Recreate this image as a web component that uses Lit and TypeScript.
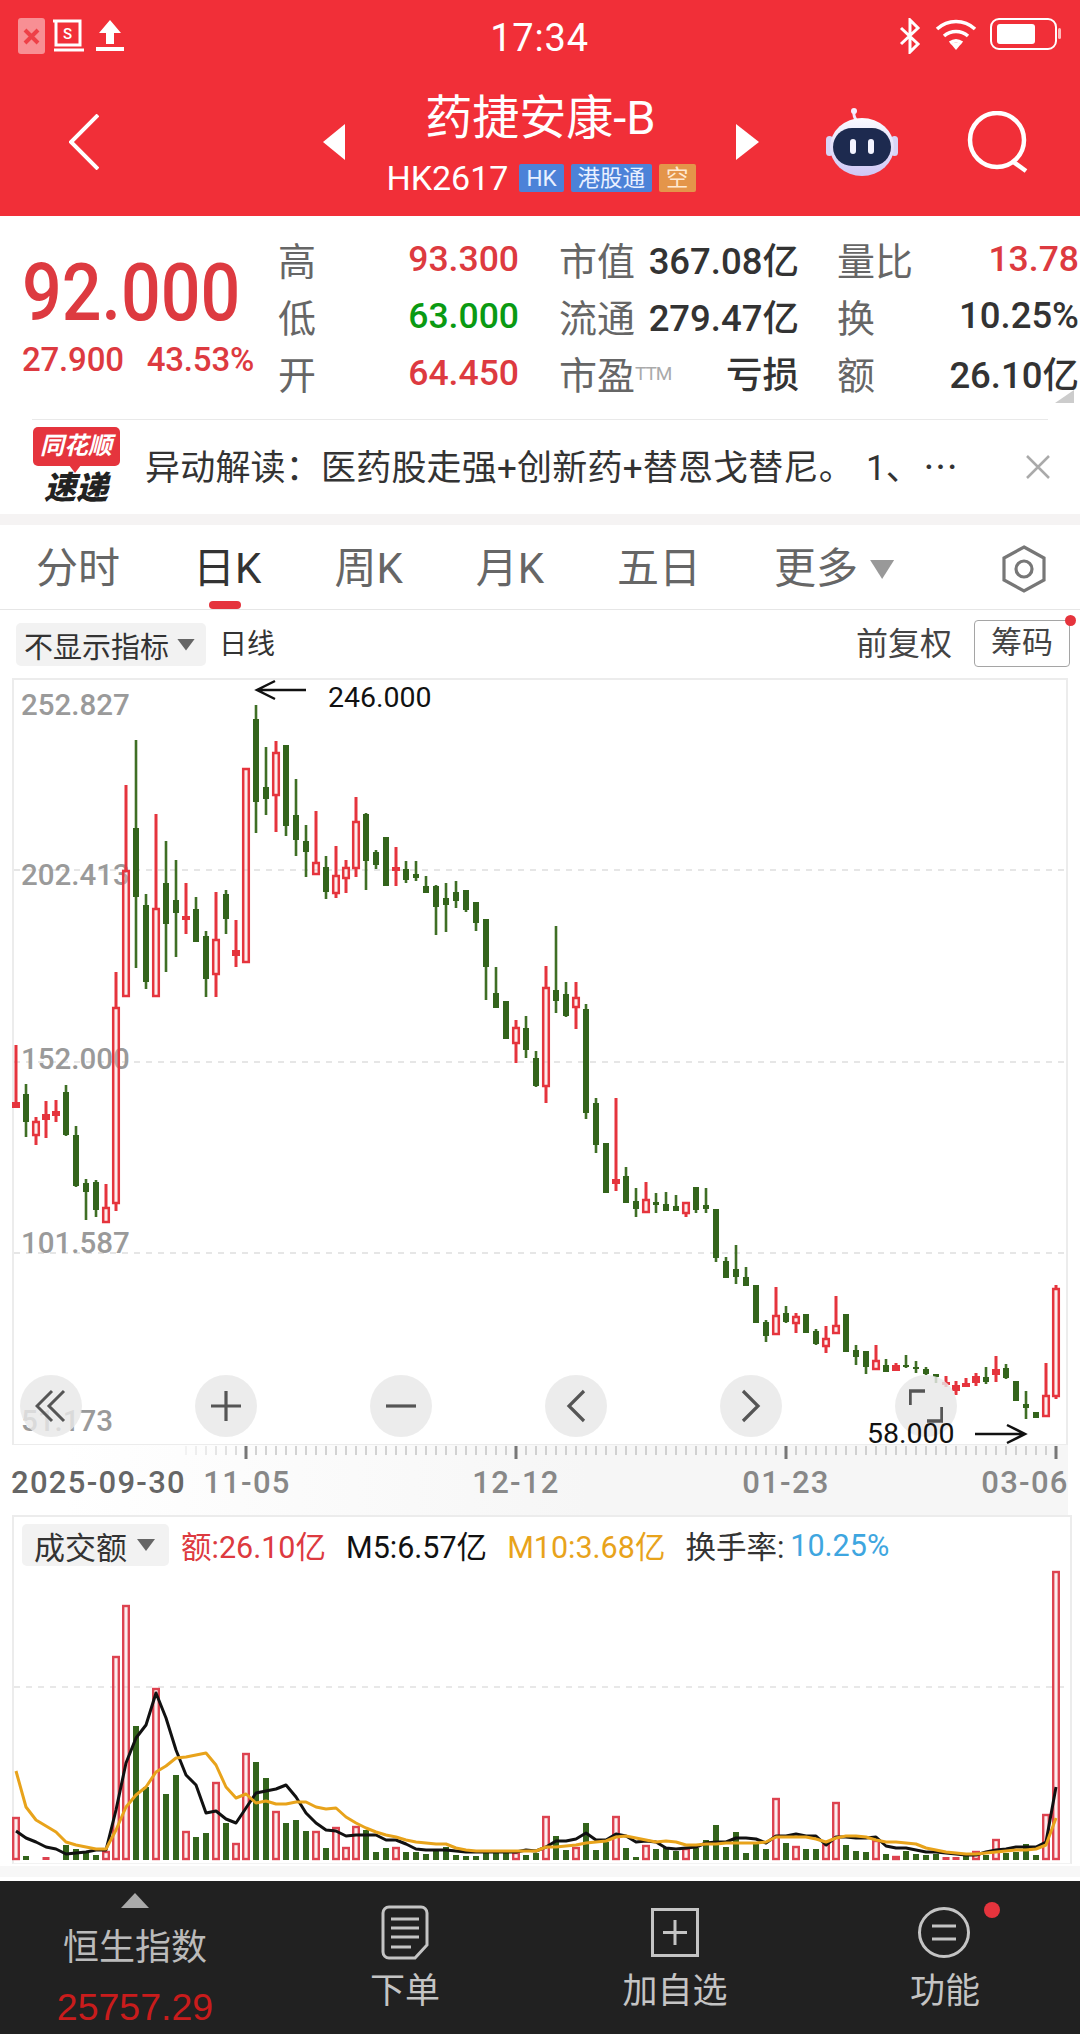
import { LitElement, html, css, svg } from "lit";
import { customElement } from "lit/decorators.js";

type C = [string, number, number, number, number];
// type: g = green solid, h = red hollow, s = red solid; wick top, wick bottom, body top, body bottom
const CANDLES: C[] = [
["s",1045,1108,1102,1108],["g",1084,1137,1094,1122],["h",1117,1145,1122,1135],["s",1101,1138,1114,1120],["s",1100,1122,1111,1116],
["g",1085,1136,1092,1135],["g",1126,1187,1135,1186],["g",1179,1220,1183,1192],["g",1180,1217,1182,1210],["h",1184,1222,1208,1222],
["h",972,1211,1008,1203],["h",785,997,871,996],["g",740,968,828,897],["g",894,989,905,982],["h",814,997,909,996],
["g",841,972,883,924],["g",860,957,900,913],["s",883,934,916,920],["g",897,942,909,942],["g",931,997,936,979],
["h",892,997,940,974],["g",890,934,894,919],["s",920,967,950,956],["h",768,963,769,962],["g",705,833,719,802],
["g",747,815,787,799],["h",741,832,753,795],["g",745,836,745,826],["g",779,856,815,840],["g",825,877,841,852],
["h",811,875,863,874],["g",856,899,867,892],["h",846,898,876,893],["h",860,893,868,878],["h",797,877,822,868],
["g",813,890,814,861],["g",850,869,852,865],["g",837,886,837,886],["s",847,886,867,871],["g",861,883,869,880],
["g",861,881,874,878],["g",876,893,886,893],["g",885,935,886,907],["g",883,932,898,905],["g",881,908,892,901],
["g",890,912,890,910],["g",902,931,902,923],["g",919,1000,919,967],["g",967,1008,993,1008],["g",1001,1039,1001,1039],
["h",1020,1063,1028,1043],["g",1016,1058,1028,1050],["g",1051,1087,1058,1086],["h",966,1103,988,1086],["g",926,1013,990,1001],
["g",982,1017,994,1016],["h",982,1029,998,1007],["g",1004,1119,1009,1113],["g",1098,1153,1103,1145],["g",1143,1193,1143,1193],
["s",1098,1191,1179,1184],["g",1167,1203,1176,1203],["g",1188,1217,1201,1209],["h",1182,1213,1200,1212],["g",1193,1213,1202,1205],
["g",1192,1211,1204,1211],["g",1195,1211,1206,1211],["h",1202,1217,1203,1213],["g",1187,1213,1187,1210],["g",1188,1213,1205,1209],
["g",1209,1262,1209,1258],["g",1257,1278,1261,1278],["g",1245,1284,1269,1277],["g",1267,1286,1277,1286],["g",1285,1323,1285,1323],
["g",1320,1342,1322,1336],["h",1287,1335,1316,1334],["g",1306,1323,1313,1322],["h",1313,1333,1317,1323],["g",1314,1333,1314,1333],
["g",1329,1345,1331,1344],["h",1326,1353,1339,1346],["h",1296,1333,1326,1333],["g",1314,1352,1314,1352],["g",1345,1365,1350,1357],
["g",1351,1374,1351,1367],["h",1345,1370,1361,1369],["g",1359,1372,1365,1372],["s",1363,1371,1365,1371],["g",1355,1368,1365,1367],
["g",1361,1373,1367,1369],["g",1367,1375,1369,1374],["g",1374,1383,1374,1377],["s",1376,1387,1382,1385],["s",1381,1395,1385,1391],
["s",1378,1387,1383,1387],["s",1373,1386,1376,1383],["g",1367,1384,1377,1382],["s",1356,1382,1369,1375],["g",1364,1379,1368,1378],
["g",1381,1401,1381,1401],["g",1391,1419,1404,1408],["g",1412,1418,1412,1418],["h",1363,1416,1396,1416],["h",1285,1399,1289,1396],
];
// volume bar tops, by candle index; kind: g, h or "" for no bar
const VOL: [string, number][] = [
["h",1817],["g",1856],["",0],["s",1857],["",0],["g",1845],["g",1849],["g",1851],["g",1855],["h",1851],
["h",1656],["h",1605],["g",1726],["g",1787],["h",1688],["g",1794],["g",1775],["h",1831],["g",1837],["g",1833],
["h",1782],["g",1823],["h",1843],["h",1753],["g",1762],["g",1778],["h",1811],["g",1823],["g",1820],["g",1831],
["h",1831],["g",1848],["h",1827],["h",1847],["h",1826],["g",1830],["g",1852],["g",1848],["h",1847],["g",1852],
["g",1852],["g",1854],["g",1850],["g",1847],["g",1855],["g",1856],["g",1856],["g",1850],["g",1853],["g",1853],
["h",1852],["g",1855],["g",1853],["h",1816],["g",1836],["g",1850],["h",1847],["g",1823],["g",1850],["g",1842],
["h",1816],["g",1848],["g",1857],["h",1845],["g",1849],["g",1847],["g",1851],["h",1848],["g",1848],["g",1840],
["g",1825],["g",1847],["g",1832],["g",1853],["g",1843],["g",1849],["h",1798],["g",1843],["h",1846],["g",1849],
["g",1849],["h",1844],["h",1802],["g",1845],["g",1851],["g",1852],["h",1840],["g",1854],["h",1856],["g",1851],
["g",1854],["g",1855],["g",1854],["s",1857],["s",1857],["g",1856],["h",1851],["g",1855],["h",1839],["g",1853],
["g",1852],["g",1844],["g",1855],["h",1814],["h",1571],
];
const M5 = [1831,1838,1842,1847,1849,1854,1853,1852,1850,1850,1810,1763,1738,1725,1693,1718,1750,1775,1785,1813,1811,1819,1823,1808,1793,1791,1789,1785,1797,1813,1823,1830,1831,1836,1835,1835,1835,1840,1840,1844,1849,1850,1850,1850,1851,1852,1852,1852,1852,1852,1852,1850,1851,
1847,1841,1841,1839,1833,1840,1840,1834,1836,1842,1841,1842,1848,1849,1848,1847,1843,1842,1842,1838,1838,1839,1843,1836,1836,1834,1836,1836,1845,1837,1837,1838,1838,1837,1846,1848,1848,1850,1852,1852,1853,1854,1855,1855,1852,1850,1849,1847,1847,1847,1842,1787];
const M10 = [1771,1807,1820,1826,1832,1842,1845,1847,1849,1849,1830,1807,1795,1787,1772,1766,1758,1757,1755,1753,1765,1787,1798,1794,1803,1801,1804,1804,1802,1802,1807,1809,1808,1817,1823,1828,1832,1835,1837,1840,1842,1843,1844,1844,1848,1850,1851,1851,1851,1851,1851,1851,1851,
1847,1847,1846,1845,1843,1842,1841,1837,1836,1838,1840,1842,1841,1842,1845,1845,1844,1844,1843,1843,1843,1843,1842,1837,1837,1837,1837,1839,1842,1838,1836,1836,1837,1840,1842,1842,1843,1844,1848,1850,1852,1853,1854,1854,1853,1852,1851,1850,1850,1849,1845,1818];

const cx = (i: number) => 16 + 10 * i;
const poly = (a: number[]) => a.map((y, i) => `${cx(i)},${y}`).join(" ");

@customElement("app-root")
export class AppRoot extends LitElement {
  static styles = css`
    :host { display: block; width: 1080px; height: 2034px; overflow: hidden; background: #fff;
      font-family: Roboto, "Noto Sans CJK SC", sans-serif; color: #333; }
    * { box-sizing: border-box; }
    svg { display: block; }
    .header { height: 216px; background: #f12f38; color: #fff; display: flex; flex-direction: column; }
    .status { height: 90px; display: grid; grid-template-columns: 1fr auto 1fr; padding: 18px 19px 0 18px; }
    .st-left { display: flex; gap: 7px; align-items: flex-start; }
    .st-right { display: flex; justify-content: flex-end; align-items: flex-start; gap: 12px; }
    .time { font-size: 38px; line-height: 40px; letter-spacing: .8px; }
    .nav { height: 104px; display: flex; align-items: center; padding-left: 69px; }
    .center { width: 391px; display: flex; flex-direction: column; align-items: center; }
    .title { font-size: 47px; line-height: 52px; }
    .sub { display: flex; align-items: center; gap: 7px; margin-top: 20px; height: 28px; margin-left: 1px; }
    .code { font-size: 34px; line-height: 28px; margin-right: 4px; }
    .badge { height: 28px; padding: 0 7px; background: #4c82d8; color: #e9f0ff; border-radius: 2px; font-size: 22.500px; line-height: 28px; }
    .badge.org { background: #e4954a; color: #ffe9d2; }
    .tri-l { margin-left: 224px; }
    .robot { margin-left: 67px; }
    .search { margin-left: 69px; }

    .quote { height: 203px; padding: 14px 0 0 22px; display: grid; grid-template-columns: 256px 241px 40px 240px 38px 242px; grid-template-rows: repeat(3, 57px); }
    .price { grid-row: 1 / 4; padding-top: 22px; color: #dd3a40; }
    .big { font-size: 80px; line-height: 82px; font-weight: 500; display: inline-block; transform: scaleX(.875); transform-origin: left center; }
    .chg { display: flex; gap: 23px; font-size: 33px; line-height: 40px; font-weight: 500; margin-top: 6px; letter-spacing: -.2px; }
    .cell { display: flex; justify-content: space-between; align-items: center; white-space: nowrap; }
    .lb { font-size: 38px; color: #666; }
    .val { font-size: 36.500px; font-weight: 500; color: #333; }
    .val.red, .val.grn { font-size: 35.500px; }
    .red { color: #dd3a40; }
    .grn { color: #0a9a12; }
    .ttm { font-size: 19px; color: #aaa; vertical-align: 9px; letter-spacing: -1px; }
    .corner { position: absolute; left: 1055px; top: 390px; width: 19px; height: 13px; background: #ccc; clip-path: polygon(100% 0, 100% 100%, 0 100%); }

    .news { height: 95px; margin: 0 32px; border-top: 1px solid #e9e9e9; display: flex; align-items: center; }
    .logo { width: 88px; margin-top: -2px; display: flex; flex-direction: column; align-items: center; flex: none; position: relative; }
    .bubble { width: 87px; height: 39px; background: #e5343d; border-radius: 5px; color: #fff; font-size: 24px; line-height: 39px; font-weight: 700; font-style: italic; text-align: center; }
    .bubble-tip { position: absolute; left: 37px; top: 38px; border: 6px solid transparent; border-top: 8px solid #e5343d; }
    .dijie { font-size: 32px; line-height: 34px; font-weight: 900; font-style: italic; color: #222; margin-top: 5px; }
    .news-text { margin-left: 25px; flex: none; font-size: 35px; line-height: 48px; letter-spacing: .2px; white-space: nowrap; color: #333; }
    .num1 { margin-left: 12px; }
    .dots { font-family: "Noto Sans CJK SC", sans-serif; margin-left: 2px; }
    .gap { height: 11px; background: #f5f3f3; }

    .tabs { height: 85px; border-bottom: 1px solid #e6e6e6; display: flex; align-items: flex-start; gap: 73px; padding: 21px 0 0 36px; position: relative; }
    .tab { font-size: 42px; line-height: 46px; color: #666; position: relative; white-space: nowrap; }
    .tab.on { color: #333; }
    .tab.on::after { content: ""; position: absolute; left: 16px; top: 55px; width: 32px; height: 8px; border-radius: 4px; background: #e5343d; }
    .tab-tri { display: inline-block; width: 24px; height: 19px; background: #999; clip-path: polygon(0 0, 100% 0, 50% 100%); margin-left: 12px; vertical-align: 4px; }
    .gear { margin-left: auto; margin-right: 32px; margin-top: -1px; }

    .tools { height: 68px; display: flex; align-items: flex-start; padding: 13px 0 0 16px; position: relative; }
    .chip { background: #f2f2f2; border-radius: 5px; display: flex; align-items: center; color: #333; }
    .chip.ind { height: 43px; width: 190px; padding-left: 8px; font-size: 29px; }
    .tri { width: 18px; height: 12px; background: #666; clip-path: polygon(0 0, 100% 0, 50% 100%); margin-left: 8px; }
    .day { font-size: 28px; line-height: 43px; margin-left: 13px; color: #333; }
    .fq { margin-left: auto; font-size: 32px; line-height: 43px; color: #444; }
    .chou { position: relative; margin: -3px 10px 0 22px; width: 96px; height: 47px; border: 1.5px solid #a5a5a5; border-radius: 4px; font-size: 31px; line-height: 44px; text-align: center; color: #444; }
    .chou::after { content: ""; position: absolute; right: -7px; top: -6px; width: 11px; height: 11px; border-radius: 50%; background: #e5343d; }

    .canvas { position: relative; height: 767px; }
    .axis { font-size: 29.500px; font-weight: 500; fill: #9a9a9a; }
    .note { font-size: 28.500px; fill: #111; }
    .btns { position: absolute; left: 20px; top: 697px; display: flex; gap: 113px; }
    .btn { width: 62px; height: 62px; border-radius: 50%; background: rgba(232,232,232,.82); display: flex; align-items: center; justify-content: center; }
    .over { position: absolute; left: 0; top: 0; pointer-events: none; overflow: visible; }

    .ruler { height: 70px; background: linear-gradient(90deg, #fff 6%, #f6f6f6 55%) 0 0 / 1068px 100% no-repeat; }
    .date { font-size: 31px; font-weight: 500; letter-spacing: 1.3px; fill: #888; }
    .date.first { fill: #666; }

    .vol { height: 351px; position: relative; }
    .vol::before { content: ""; position: absolute; left: 12px; top: 0; width: 1056px; height: 346px; border: 2px solid #ececec; border-bottom: 1px solid #f2f2f2; }
    .legend { height: 55px; padding: 5px 0 0 22px; display: flex; align-items: center; position: relative; font-size: 30.500px; white-space: nowrap; }
    .chip.vo { height: 42px; width: 147px; padding-left: 12px; margin-right: 12px; font-size: 31px; }
    .legend span { margin-right: 20px; }
    .blk { color: #111; }
    .org { color: #e8a31b; }
    .blu { color: #3ea6e0; margin-left: 6px; }
    .dk { color: #333; }
    .legend .tight { margin-right: 0; }
    .legend .rd { color: #dd3a40; }
    .volsvg { position: relative; }
    .band { height: 11px; background: #f7f7f7; }
    .sp { height: 4px; }

    .foot { height: 153px; background: #212121; display: grid; grid-template-columns: repeat(4, 1fr); color: #c4c4c4; }
    .fc { display: flex; flex-direction: column; align-items: center; font-size: 35px; line-height: 42px; position: relative; }
    .fc .up { width: 28px; height: 15px; background: #aaa; clip-path: polygon(50% 0, 100% 100%, 0 100%); margin-top: 12px; }
    .fc .idx { margin-top: 18px; font-size: 36px; line-height: 44px; color: #bbb; }
    .fc .num { font-family: "Liberation Sans", sans-serif; font-size: 37.500px; line-height: 44px; color: #c91c1c; margin-top: 15px; }
    .fc svg { margin-top: 24px; }
    .fc .t { margin-top: 11px; }
    .dot { position: absolute; left: 174px; top: 21px; width: 16px; height: 16px; border-radius: 50%; background: #e5343d; }
    .s-txt { font-size: 15px; font-weight: 500; fill: #fff; stroke: none; }
  `;

  candles() {
    return CANDLES.map(([k, wt, wb, bt, bb], i) => {
      const x = cx(i);
      if (k === "g") {
        return svg`<rect x=${x - 1.3} y=${wt} width="2.6" height=${wb - wt} fill="#3f6f25"/><rect x=${x - 3} y=${bt} width="6" height=${bb - bt} fill="#33641b"/>`;
      }
      if (k === "s") {
        return svg`<rect x=${x - 1.5} y=${wt} width="3" height=${wb - wt} fill="#e5343d"/><rect x=${x - 4} y=${bt} width="8" height=${bb - bt} fill="#e5343d"/>`;
      }
      return svg`<rect x=${x - 1.5} y=${wt} width="3" height=${bt - wt} fill="#e5343d"/><rect x=${x - 1.5} y=${bb} width="3" height=${wb - bb} fill="#e5343d"/><rect x=${x - 2.8} y=${bt} width="5.6" height=${bb - bt} fill="#f5c8c8" fill-opacity=".35" stroke="#e5343d" stroke-width="2.5"/>`;
    });
  }

  volBars() {
    return VOL.map(([k, top], i) => {
      const x = cx(i);
      if (k === "") return null;
      if (k === "g") return svg`<rect x=${x - 3} y=${top} width="6" height=${1860 - top} fill="#33641b"/>`;
      if (k === "s") return svg`<rect x=${x - 3.5} y=${top} width="7" height=${1860 - top} fill="#dd4350"/>`;
      return svg`<rect x=${x - 2.8} y=${top + 1} width="5.6" height=${1858 - top} fill="#f5c8c8" fill-opacity=".3" stroke="#dd4350" stroke-width="2.4"/>`;
    });
  }

  ticks() {
    const out = [];
    for (let i = 17; i <= 104; i++) {
      const major = (i - 23) % 27 === 0;
      const x = cx(i);
      const op = i < 23 ? 0.25 + (i - 17) * 0.1 : 1;
      out.push(major
        ? svg`<rect x=${x - 1.5} y="1446" width="3" height="13" fill="#777"/>`
        : svg`<rect x=${x - .5} y="1446" width="1" height="9" fill="#aaa" opacity=${op}/>`);
    }
    return out;
  }

  render() {
    return html`
      <div class="header">
        <div class="status">
          <div class="st-left">
            <svg width="27" height="36" viewBox="0 0 27 36"><rect width="27" height="36" rx="3" fill="#f88f94"/><path d="M7 12l13 13M20 12L7 25" stroke="#ee4048" stroke-width="4"/></svg>
            <svg width="32" height="34" viewBox="0 0 32 34" fill="none" stroke="#fff" stroke-width="3"><path d="M1 3h27v24H4V3"/><path d="M2 32h30"/><text class="s-txt" x="11" y="21">S</text></svg>
            <svg style="margin-left:5px" width="28" height="34" viewBox="0 0 28 34" fill="#fff"><path d="M14 2L25 15H18V26H10V15H3z"/><rect y="29" width="28" height="4"/></svg>
          </div>
          <div class="time">17:34</div>
          <div class="st-right">
            <svg width="24" height="36" viewBox="0 0 24 36" fill="none" stroke="#fff" stroke-width="3"><path d="M3 10L20 26L12 34V2L20 10L3 26"/></svg>
            <svg width="44" height="32" viewBox="0 0 44 32" fill="none" stroke="#fff" stroke-width="3.6"><path d="M3 11c11-10 27-10 38 0M10 18c7-6 17-6 24 0M16 25c4-3 8-3 12 0" /><path d="M22 32l-5-6c3-2 7-2 10 0z" fill="#fff" stroke="none"/></svg>
            <svg width="71" height="32" viewBox="0 0 71 32" fill="none"><rect x="1" y="1" width="65" height="30" rx="8" stroke="#fff" stroke-width="2"/><rect x="7" y="6" width="38" height="20" rx="3" fill="#fff"/><rect x="68" y="10" width="3" height="11" rx="1.5" fill="#fbb"/></svg>
          </div>
        </div>
        <div class="nav">
          <svg width="30" height="56" viewBox="0 0 30 56" fill="none" stroke="#fff" stroke-width="4"><path d="M29 1L2 28L29 55"/></svg>
          <svg class="tri-l" width="22" height="36" viewBox="0 0 22 36" fill="#fff"><path d="M22 0V36L0 18z"/></svg>
          <div class="center">
            <div class="title">药捷安康-B</div>
            <div class="sub">
              <span class="code">HK2617</span>
              <span class="badge">HK</span>
              <span class="badge">港股通</span>
              <span class="badge org">空</span>
            </div>
          </div>
          <svg width="23" height="36" viewBox="0 0 23 36" fill="#fff"><path d="M0 0V36L23 18z"/></svg>
          <svg class="robot" width="72" height="68" viewBox="0 0 72 68" fill="none">
            <defs><linearGradient id="rb" x1="0" y1="0" x2="0" y2="1"><stop offset="0" stop-color="#fafaff"/><stop offset="1" stop-color="#cfc7f5"/></linearGradient></defs>
            <path d="M30 12C27 7 28 4 29 3" stroke="#f0e8ff" stroke-width="3"/><circle cx="28" cy="3" r="3" fill="#f6eeff"/>
            <rect x="0" y="28" width="7" height="20" rx="3.500" fill="#d8d4f6"/><rect x="65" y="28" width="7" height="20" rx="3.500" fill="#d8d4f6"/>
            <ellipse cx="36" cy="39" rx="32" ry="29" fill="url(#rb)"/>
            <rect x="7" y="20" width="58" height="38" rx="19" fill="#1d2a4f"/>
            <rect x="24" y="31" width="6" height="15" rx="3" fill="#f4f4ff"/><rect x="42" y="31" width="6" height="15" rx="3" fill="#f4f4ff"/>
          </svg>
          <svg class="search" width="62" height="62" viewBox="0 0 62 62" fill="none" stroke="#fff" stroke-width="4.5"><ellipse cx="30" cy="29" rx="27" ry="27"/><path d="M45 50l14 10"/></svg>
        </div>
      </div>

      <div class="quote">
        <div class="price">
          <div class="big">92.000</div>
          <div class="chg"><span>27.900</span><span>43.53%</span></div>
        </div>
        <div class="cell"><span class="lb">高</span><span class="val red">93.300</span></div><div></div>
        <div class="cell"><span class="lb">市值</span><span class="val">367.08亿</span></div><div></div>
        <div class="cell"><span class="lb">量比</span><span class="val red">13.78</span></div>
        <div class="cell"><span class="lb">低</span><span class="val grn">63.000</span></div><div></div>
        <div class="cell"><span class="lb">流通</span><span class="val">279.47亿</span></div><div></div>
        <div class="cell"><span class="lb">换</span><span class="val">10.25%</span></div>
        <div class="cell"><span class="lb">开</span><span class="val red">64.450</span></div><div></div>
        <div class="cell"><span class="lb">市盈<span class="ttm">TTM</span></span><span class="val">亏损</span></div><div></div>
        <div class="cell"><span class="lb">额</span><span class="val">26.10亿</span></div>
        <div class="corner"></div>
      </div>

      <div class="news">
        <div class="logo">
          <div class="bubble">同花顺</div>
          <div class="bubble-tip"></div>
          <div class="dijie">速递</div>
        </div>
        <div class="news-text">异动解读：医药股走强+创新药+替恩戈替尼。<span class="num1">1、</span><span class="dots">…</span></div>
        <svg style="margin-left:auto;margin-right:-2px" width="24" height="24" viewBox="0 0 24 24" stroke="#aaa" stroke-width="2.5"><path d="M1 1l22 22M23 1L1 23"/></svg>
      </div>
      <div class="gap"></div>

      <div class="tabs">
        <div class="tab">分时</div>
        <div class="tab on">日K</div>
        <div class="tab">周K</div>
        <div class="tab">月K</div>
        <div class="tab">五日</div>
        <div class="tab">更多<span class="tab-tri"></span></div>
        <svg class="gear" width="48" height="48" viewBox="0 0 48 48" fill="none" stroke="#777" stroke-width="3.2"><path d="M24 2l20 11v22L24 46 4 35V13z"/><circle cx="24" cy="24" r="8"/></svg>
      </div>

      <div class="tools">
        <div class="chip ind">不显示指标<div class="tri"></div></div>
        <div class="day">日线</div>
        <div class="fq">前复权</div>
        <div class="chou">筹码</div>
      </div>

      <div class="canvas">
        <svg width="1080" height="767" viewBox="0 678 1080 767">
          <rect x="13" y="679" width="1054" height="766" fill="none" stroke="#ececec" stroke-width="2"/>
          ${[870, 1062, 1253].map((y) => svg`<line x1="14" x2="1066" y1=${y} y2=${y} stroke="#e6e6e6" stroke-width="2" stroke-dasharray="6 6"/>`)}
          <text class="axis" x="21" y="715">252.827</text>
          <text class="axis" x="21" y="885">202.413</text>
          <text class="axis" x="21" y="1069">152.000</text>
          <text class="axis" x="21" y="1253">101.587</text>
          <text class="axis" x="21" y="1431">51.173</text>
          ${this.candles()}
        </svg>
        <div class="btns">
          <div class="btn"><svg width="32" height="34" viewBox="0 0 32 34" fill="none" stroke="#555" stroke-width="3"><path d="M17 2L2 17l15 15M29 2L14 17l15 15"/></svg></div>
          <div class="btn"><svg width="30" height="30" viewBox="0 0 30 30" stroke="#555" stroke-width="3.2"><path d="M0 15h30M15 0v30"/></svg></div>
          <div class="btn"><svg width="30" height="30" viewBox="0 0 30 30" stroke="#555" stroke-width="3.2"><path d="M0 15h30"/></svg></div>
          <div class="btn"><svg width="20" height="34" viewBox="0 0 20 34" fill="none" stroke="#555" stroke-width="3.2"><path d="M18 2L3 17l15 15"/></svg></div>
          <div class="btn"><svg width="20" height="34" viewBox="0 0 20 34" fill="none" stroke="#555" stroke-width="3.2"><path d="M2 2l15 15L2 32"/></svg></div>
          <div class="btn"><svg width="34" height="34" viewBox="0 0 34 34" fill="none" stroke="#555" stroke-width="3.5"><path d="M1 16V2h15M33 18v14H18"/></svg></div>
        </div>
        <svg class="over" width="1080" height="767" viewBox="0 678 1080 767" fill="none">
          <path d="M306 690H257M275 681l-18 9 18 9" stroke="#111" stroke-width="2.5"/>
          <text class="note" x="328" y="707">246.000</text>
          <text class="note" x="867" y="1443">58.000</text>
          <path d="M975 1434h50M1007 1425l18 9-18 9" stroke="#111" stroke-width="2.5"/>
        </svg>
      </div>

      <div class="ruler">
        <svg width="1080" height="70" viewBox="0 1445 1080 70">
          ${this.ticks()}
          <text class="date first" x="11" y="1493">2025-09-30</text>
          <text class="date" x="247" y="1493" text-anchor="middle">11-05</text>
          <text class="date" x="516" y="1493" text-anchor="middle">12-12</text>
          <text class="date" x="786" y="1493" text-anchor="middle">01-23</text>
          <text class="date" x="1025" y="1493" text-anchor="middle">03-06</text>
        </svg>
      </div>

      <div class="vol">
        <div class="legend">
          <div class="chip vo">成交额<div class="tri" style="margin-left:10px"></div></div>
          <span class="rd">额:26.10亿</span>
          <span class="blk">M5:6.57亿</span>
          <span class="org">M10:3.68亿</span>
          <span class="dk tight">换手率:</span><span class="blu">10.25%</span>
        </div>
        <svg class="volsvg" width="1080" height="296" viewBox="0 1570 1080 296" fill="none">
          <line x1="14" x2="1066" y1="1687" y2="1687" stroke="#e8e8e8" stroke-width="2" stroke-dasharray="6 6"/>
          ${this.volBars()}
          <polyline points=${poly(M5)} stroke="#111" stroke-width="3" stroke-linejoin="round"/>
          <polyline points=${poly(M10)} stroke="#e8a31b" stroke-width="3" stroke-linejoin="round"/>
        </svg>
      </div>
      <div class="band"></div>
      <div class="sp"></div>

      <div class="foot">
        <div class="fc">
          <div class="up"></div>
          <div class="idx">恒生指数</div>
          <div class="num">25757.29</div>
        </div>
        <div class="fc">
          <svg width="48" height="55" viewBox="0 0 48 55" fill="none" stroke="#c4c4c4" stroke-width="3"><path d="M8 2h32a6 6 0 0 1 6 6v32l-12 13H8a6 6 0 0 1-6-6V8a6 6 0 0 1 6-6z"/><path d="M10 14h28M10 23h28M10 32h28M10 42h20"/></svg>
          <div class="t">下单</div>
        </div>
        <div class="fc">
          <svg style="margin-top:27px" width="48" height="49" viewBox="0 0 48 49" fill="none" stroke="#c4c4c4" stroke-width="3"><rect x="1.5" y="1.5" width="45" height="46"/><path d="M12 24.500h24M24 12v25"/></svg>
          <div class="t" style="margin-top:14px">加自选</div>
        </div>
        <div class="fc">
          <svg style="margin-top:26px;margin-left:-2px" width="52" height="51" viewBox="0 0 52 51" fill="none" stroke="#c4c4c4" stroke-width="3"><ellipse cx="26" cy="25.500" rx="24.500" ry="24"/><path d="M14 19h24M14 32h24"/></svg>
          <div class="t" style="margin-top:13px">功能</div>
          <div class="dot"></div>
        </div>
      </div>
    `;
  }
}
